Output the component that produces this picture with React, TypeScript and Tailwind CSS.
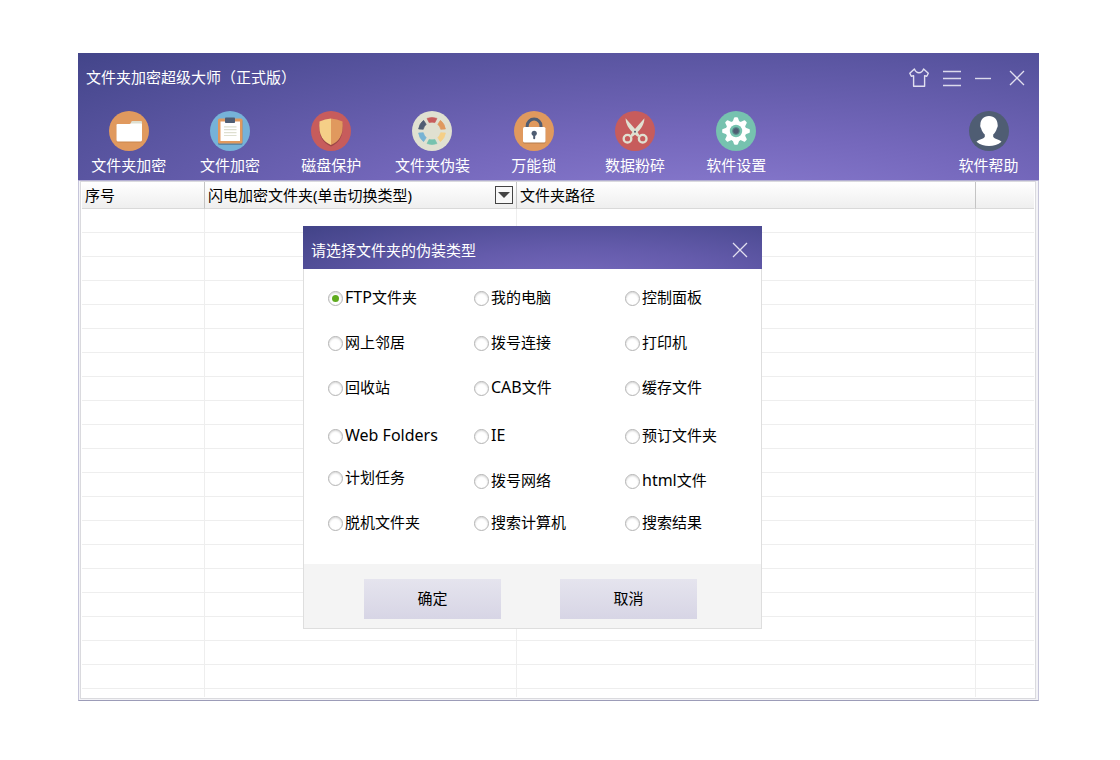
import React, { useState } from "react";

function FolderIcon() {
  return (
    <svg viewBox="0 0 40 40" className="size-10" aria-hidden="true">
      <circle cx="20" cy="20" r="20" fill="#e0995e" />
      <rect x="7.5" y="14" width="25.5" height="17.5" rx="1.5" fill="#bd7b45" opacity=".6" />
      <path d="M21 14 L22.3 10.8 Q22.6 10 23.4 10 H32 Q33 10 33 11 V20 H21z" fill="#dedfd0" />
      <path d="M8.5 13 H20.5 L22 12.6 H32 Q33 12.6 33 13.6 V29 Q33 30.5 31.5 30.5 H9 Q7.5 30.5 7.5 29 V14 Q7.5 13 8.5 13z" fill="#fff" />
    </svg>
  );
}

function ClipboardIcon() {
  return (
    <svg viewBox="0 0 40 40" className="size-10" aria-hidden="true">
      <circle cx="20" cy="20" r="20" fill="#76b2d8" />
      <rect x="8" y="8.5" width="24.5" height="25.5" rx="1.5" fill="#5a87a8" />
      <rect x="8" y="7.5" width="24.5" height="25" rx="1.5" fill="#e0995e" />
      <rect x="10.5" y="10.5" width="19.5" height="19.5" fill="#fff" />
      <rect x="15" y="6.5" width="10" height="5.5" rx=".8" fill="#4f5d73" />
      <path d="M14 15.8H26.5M14 18.7H26.5M14 21.6H26.5M14 24.5H26.5" stroke="#dedfd0" strokeWidth="1.2" />
    </svg>
  );
}

function ShieldIcon() {
  return (
    <svg viewBox="0 0 40 40" className="size-10" aria-hidden="true">
      <circle cx="20" cy="20" r="20" fill="#c75c5c" />
      <path d="M20 9 Q14 9.5 8.5 12 Q7.5 22 11 28 Q14 33 20 35.5 Q26 33 29 28 Q32.5 22 31.5 12 Q26 9.5 20 9z" fill="#9c4747" />
      <path d="M20 7.5 Q14 7.8 8.5 10.5 Q7.5 20.5 11 26.5 Q14 31.5 20 34z" fill="#f5cf87" />
      <path d="M20 7.5 Q26 7.8 31.5 10.5 Q32.5 20.5 29 26.5 Q26 31.5 20 34z" fill="#e0995e" />
    </svg>
  );
}

const wheel = [
  { angle: 0, fill: "#c75c5c" },
  { angle: 60, fill: "#e0995e" },
  { angle: 120, fill: "#f5cf87" },
  { angle: 180, fill: "#76c2af" },
  { angle: 240, fill: "#77b3d4" },
  { angle: 300, fill: "#4f5d73" },
];

function WheelIcon() {
  return (
    <svg viewBox="0 0 40 40" className="size-10" aria-hidden="true">
      <circle cx="20" cy="20" r="20" fill="#e0e0d1" />
      {wheel.map((w) => (
        <path
          key={w.angle}
          d="M15 7.4 Q20 5.4 25 7.4 L22.9 11.6 Q20 10.8 17.1 11.6z"
          transform={"rotate(" + w.angle + " 20 20)"}
          fill={w.fill}
          stroke={w.fill}
          strokeWidth=".6"
          strokeLinejoin="round"
        />
      ))}
    </svg>
  );
}

function LockIcon() {
  return (
    <svg viewBox="0 0 40 40" className="size-10" aria-hidden="true">
      <circle cx="20" cy="20" r="20" fill="#e0995e" />
      <path d="M13.2 18 V15 A6.9 6.9 0 0 1 27 15 V18" fill="none" stroke="#4f5d73" strokeWidth="3" />
      <rect x="9" y="17" width="22.5" height="15.5" rx="1.5" fill="#b37a4b" />
      <rect x="9" y="16" width="22.5" height="15.5" rx="1.5" fill="#fff" />
      <circle cx="20.2" cy="22.3" r="2.6" fill="#4f5d73" />
      <rect x="19.2" y="23" width="2" height="5.2" rx="1" fill="#4f5d73" />
    </svg>
  );
}

function ScissorsIcon() {
  return (
    <svg viewBox="0 0 40 40" className="size-10" aria-hidden="true">
      <circle cx="20" cy="20" r="20" fill="#c75c5c" />
      <path d="M10.6 7.3 L21.6 19.8 L24.8 24.4 L22.6 25.8 L18.6 22.4 C14.4 18.6 10.6 13.6 10.6 7.3z" fill="#e0e0d1" />
      <path d="M29.4 7.3 L18.4 19.8 L15.2 24.4 L17.4 25.8 L21.4 22.4 C25.6 18.6 29.4 13.6 29.4 7.3z" fill="#e0e0d1" />
      <circle cx="12.5" cy="27.7" r="3.8" fill="none" stroke="#e0e0d1" strokeWidth="2.4" />
      <circle cx="27.7" cy="27.7" r="3.8" fill="none" stroke="#e0e0d1" strokeWidth="2.4" />
      <circle cx="20" cy="20.8" r="1" fill="#4f5d73" />
    </svg>
  );
}

const teeth = [0, 45, 90, 135, 180, 225, 270, 315];

function GearIcon() {
  return (
    <svg viewBox="0 0 40 40" className="size-10" aria-hidden="true">
      <circle cx="20" cy="20" r="20" fill="#76c2af" />
      <circle cx="20" cy="20" r="10.3" fill="#fff" />
      {teeth.map((t) => (
        <path
          key={t}
          d="M16.6 11 L18 7 Q18.2 6.2 19 6.2 H21 Q21.8 6.2 22 7 L23.4 11z"
          transform={"rotate(" + t + " 20 20)"}
          fill="#fff"
        />
      ))}
      <circle cx="20" cy="20" r="6.2" fill="#76c2af" />
      <circle cx="20" cy="20" r="3.4" fill="#4f5d73" stroke="#5d8f8e" strokeWidth="1" />
    </svg>
  );
}

function UserIcon() {
  return (
    <svg viewBox="0 0 40 40" className="size-10" aria-hidden="true">
      <circle cx="20" cy="20" r="20" fill="#4f5d73" />
      <path
        d="M20 5 C25.5 5 28.6 9 28.6 13.5 C28.9 14.3 28.8 16.3 28 17 C27.2 20.5 25.5 22.3 24.2 23.5 V25.8 C25.3 28.2 30.5 28.2 32.5 30.8 C29 33.7 24.5 35 20 35 C15.5 35 11 33.7 7.5 30.8 C9.5 28.2 14.7 28.2 15.8 25.8 V23.5 C14.5 22.3 12.8 20.5 12 17 C11.2 16.3 11.1 14.3 11.4 13.5 C11.4 9 14.5 5 20 5z"
        fill="#fff"
      />
    </svg>
  );
}

function CloseGlyph() {
  return (
    <svg viewBox="0 0 16 16" className="size-4" aria-hidden="true">
      <path d="M1 1L15 15M15 1L1 15" stroke="#e2e0f0" strokeWidth="1.3" fill="none" />
    </svg>
  );
}

const tools = [
  { label: "文件夹加密", Icon: FolderIcon },
  { label: "文件加密", Icon: ClipboardIcon },
  { label: "磁盘保护", Icon: ShieldIcon },
  { label: "文件夹伪装", Icon: WheelIcon },
  { label: "万能锁", Icon: LockIcon },
  { label: "数据粉碎", Icon: ScissorsIcon },
  { label: "软件设置", Icon: GearIcon },
];

function ToolButton({ label, Icon }: { label: string; Icon: () => React.JSX.Element }) {
  return (
    <button type="button" className="flex flex-col items-center gap-1 whitespace-nowrap text-white">
      <Icon />
      <span>{label}</span>
    </button>
  );
}

function TitleBar() {
  return (
    <div className="flex h-12 items-center justify-between pr-[14px] pl-2 text-white">
      <h1>文件夹加密超级大师（正式版）</h1>
      <div className="flex items-center gap-[14px] pt-[2px]">
        <button type="button" aria-label="换肤">
          <svg viewBox="0 0 20 20" className="size-5" aria-hidden="true">
            <path
              d="M5.4 1 L0.8 5.2 L2.3 8.2 L4.6 7.8 V18.3 H15.6 V7.8 L17.8 8.2 L19.3 5.2 L14.6 1 C13.8 3 12.2 4.7 10 4.7 C7.8 4.7 6.2 3 5.4 1z"
              fill="none"
              stroke="#e2e0f0"
              strokeWidth="1.4"
              strokeLinejoin="round"
            />
          </svg>
        </button>
        <button type="button" aria-label="菜单">
          <svg viewBox="0 0 18 18" className="size-[18px]" aria-hidden="true">
            <path d="M0 2.5H18M0 9.5H18M0 16.5H18" stroke="#dcdaec" strokeWidth="1.4" />
          </svg>
        </button>
        <button type="button" aria-label="最小化">
          <svg viewBox="0 0 16 16" className="size-4" aria-hidden="true">
            <path d="M0 8.5H16" stroke="#dcdaec" strokeWidth="1.4" />
          </svg>
        </button>
        <button type="button" aria-label="关闭" className="pl-1">
          <CloseGlyph />
        </button>
      </div>
    </div>
  );
}

const rows = Array.from({ length: 20 }, (_, i) => i);

function FileTable() {
  return (
    <div className="border-x border-b border-[#9c9cb8] border-x-[#c6c5da] bg-[#f3f3f7] pr-[2px] pb-px pl-px">
      <div className="border border-[#dadade] bg-white px-px pb-px">
        <table className="w-full table-fixed border-separate border-spacing-0">
          <colgroup>
            <col className="w-[123px]" />
            <col className="w-[312px]" />
            <col />
            <col className="w-[58px]" />
          </colgroup>
          <thead>
            <tr className="h-[27px] bg-linear-to-b from-white to-[#eeeeee] text-left [&>th]:border-b [&>th]:border-b-[#d9d9d9] [&>th]:py-0 [&>th]:pr-[3px] [&>th]:pl-[3px] [&>th]:font-normal">
              <th className="border-r border-r-[#c4c4c4]">序号</th>
              <th className="border-r border-r-[#c4c4c4]">
                <div className="flex items-center justify-between">
                  <span>闪电加密文件夹(单击切换类型)</span>
                  <button
                    type="button"
                    aria-label="切换类型"
                    className="flex size-[18px] items-center justify-center border border-[#444444] bg-[#f8f8f8]"
                  >
                    <svg viewBox="0 0 12 6" className="h-[6px] w-3" aria-hidden="true">
                      <path d="M0 0H12L6 6z" fill="#444" />
                    </svg>
                  </button>
                </div>
              </th>
              <th className="border-r border-r-[#c4c4c4]">文件夹路径</th>
              <th />
            </tr>
          </thead>
          <tbody>
            {rows.map((r) => (
              <tr
                key={r}
                className="h-6 [&>td]:border-b [&>td]:border-[#eeeeee] [&>td]:p-0 [&>td:not(:last-child)]:border-r"
              >
                <td />
                <td />
                <td />
                <td />
              </tr>
            ))}
            <tr className="h-2 [&>td]:border-[#eeeeee] [&>td]:p-0 [&>td:not(:last-child)]:border-r">
              <td />
              <td />
              <td />
              <td />
            </tr>
          </tbody>
        </table>
      </div>
    </div>
  );
}

type Option = { latin?: string; text?: string };

const columns: { rows: string; options: Option[] }[] = [
  {
    rows: "grid-rows-[45px_45px_48px_42px_45px_20px] w-[146px]",
    options: [
      { latin: "FTP", text: "文件夹" },
      { text: "网上邻居" },
      { text: "回收站" },
      { latin: "Web Folders" },
      { text: "计划任务" },
      { text: "脱机文件夹" },
    ],
  },
  {
    rows: "grid-rows-[45px_45px_48px_45px_42px_20px] w-[151px]",
    options: [
      { text: "我的电脑" },
      { text: "拨号连接" },
      { latin: "CAB", text: "文件" },
      { latin: "IE" },
      { text: "拨号网络" },
      { text: "搜索计算机" },
    ],
  },
  {
    rows: "grid-rows-[45px_45px_48px_45px_42px_20px] flex-1",
    options: [
      { text: "控制面板" },
      { text: "打印机" },
      { text: "缓存文件" },
      { text: "预订文件夹" },
      { latin: "html", text: "文件" },
      { text: "搜索结果" },
    ],
  },
];

function DisguiseDialog() {
  const [selected, setSelected] = useState("FTP文件夹");
  return (
    <section
      role="dialog"
      aria-labelledby="dialog-title"
      className="absolute top-[173px] left-[225px] w-[459px] bg-white"
    >
      <header className="flex h-[43px] items-center justify-between bg-[#4c4a94] bg-[radial-gradient(ellipse_80%_200%_at_60%_140%,#7a6cc0,#645bab_45%,#434489)] px-[14px] pt-[5px] pl-2 text-white">
        <h2 id="dialog-title">请选择文件夹的伪装类型</h2>
        <button type="button" aria-label="关闭">
          <CloseGlyph />
        </button>
      </header>
      <div className="border-x border-b border-[#dedede]">
        <div className="flex pt-[19px] pb-[31px] pl-6">
          {columns.map((c, i) => (
            <div key={i} className={"grid items-start " + c.rows}>
              {c.options.map((o) => {
                const name = (o.latin ?? "") + (o.text ?? "");
                return (
                  <label key={name} className="flex h-5 items-center gap-[2px] whitespace-nowrap">
                    <input
                      type="radio"
                      name="disguise"
                      value={name}
                      checked={selected === name}
                      onChange={() => setSelected(name)}
                      className="flex size-[15px] shrink-0 appearance-none items-center justify-center rounded-full border border-[#b4b4b4] bg-white shadow-[inset_0_1px_2px_#d4d4d4] before:size-[7px] before:rounded-full checked:before:bg-[#5fab1e]"
                    />
                    <span className="pb-[2px]">
                      {o.latin && <span className="text-base leading-5">{o.latin}</span>}
                      {o.text}
                    </span>
                  </label>
                );
              })}
            </div>
          ))}
        </div>
        <footer className="flex gap-[59px] bg-[#f4f4f4] pt-[15px] pb-[9px] pl-[60px]">
          <button type="button" className="h-10 w-[137px] bg-linear-to-b from-[#e5e4ee] to-[#d7d5e5] pb-[2px]">
            确定
          </button>
          <button type="button" className="h-10 w-[137px] bg-linear-to-b from-[#e5e4ee] to-[#d7d5e5] pb-[2px]">
            取消
          </button>
        </footer>
      </div>
    </section>
  );
}

export default function App() {
  return (
    <div className="min-h-screen bg-white pt-[53px] pr-[81px] pb-10 pl-[78px] font-['Noto_Sans','Noto_Sans_CJK_SC',sans-serif] text-[15px] leading-5 text-black">
      <main className="relative">
        <header className="border-b border-[#b3aed3] bg-[#4a4a92] bg-[radial-gradient(ellipse_95%_200%_at_66%_145%,#9384d8,#7568bc_40%,#43458a)]">
          <TitleBar />
          <nav className="flex items-start justify-between pt-[10px] pb-[5px]">
            <div className="grid w-[709px] grid-cols-7">
              {tools.map((t) => (
                <ToolButton key={t.label} label={t.label} Icon={t.Icon} />
              ))}
            </div>
            <div className="grid w-[101px]">
              <ToolButton label="软件帮助" Icon={UserIcon} />
            </div>
          </nav>
        </header>
        <FileTable />
        <DisguiseDialog />
      </main>
    </div>
  );
}
